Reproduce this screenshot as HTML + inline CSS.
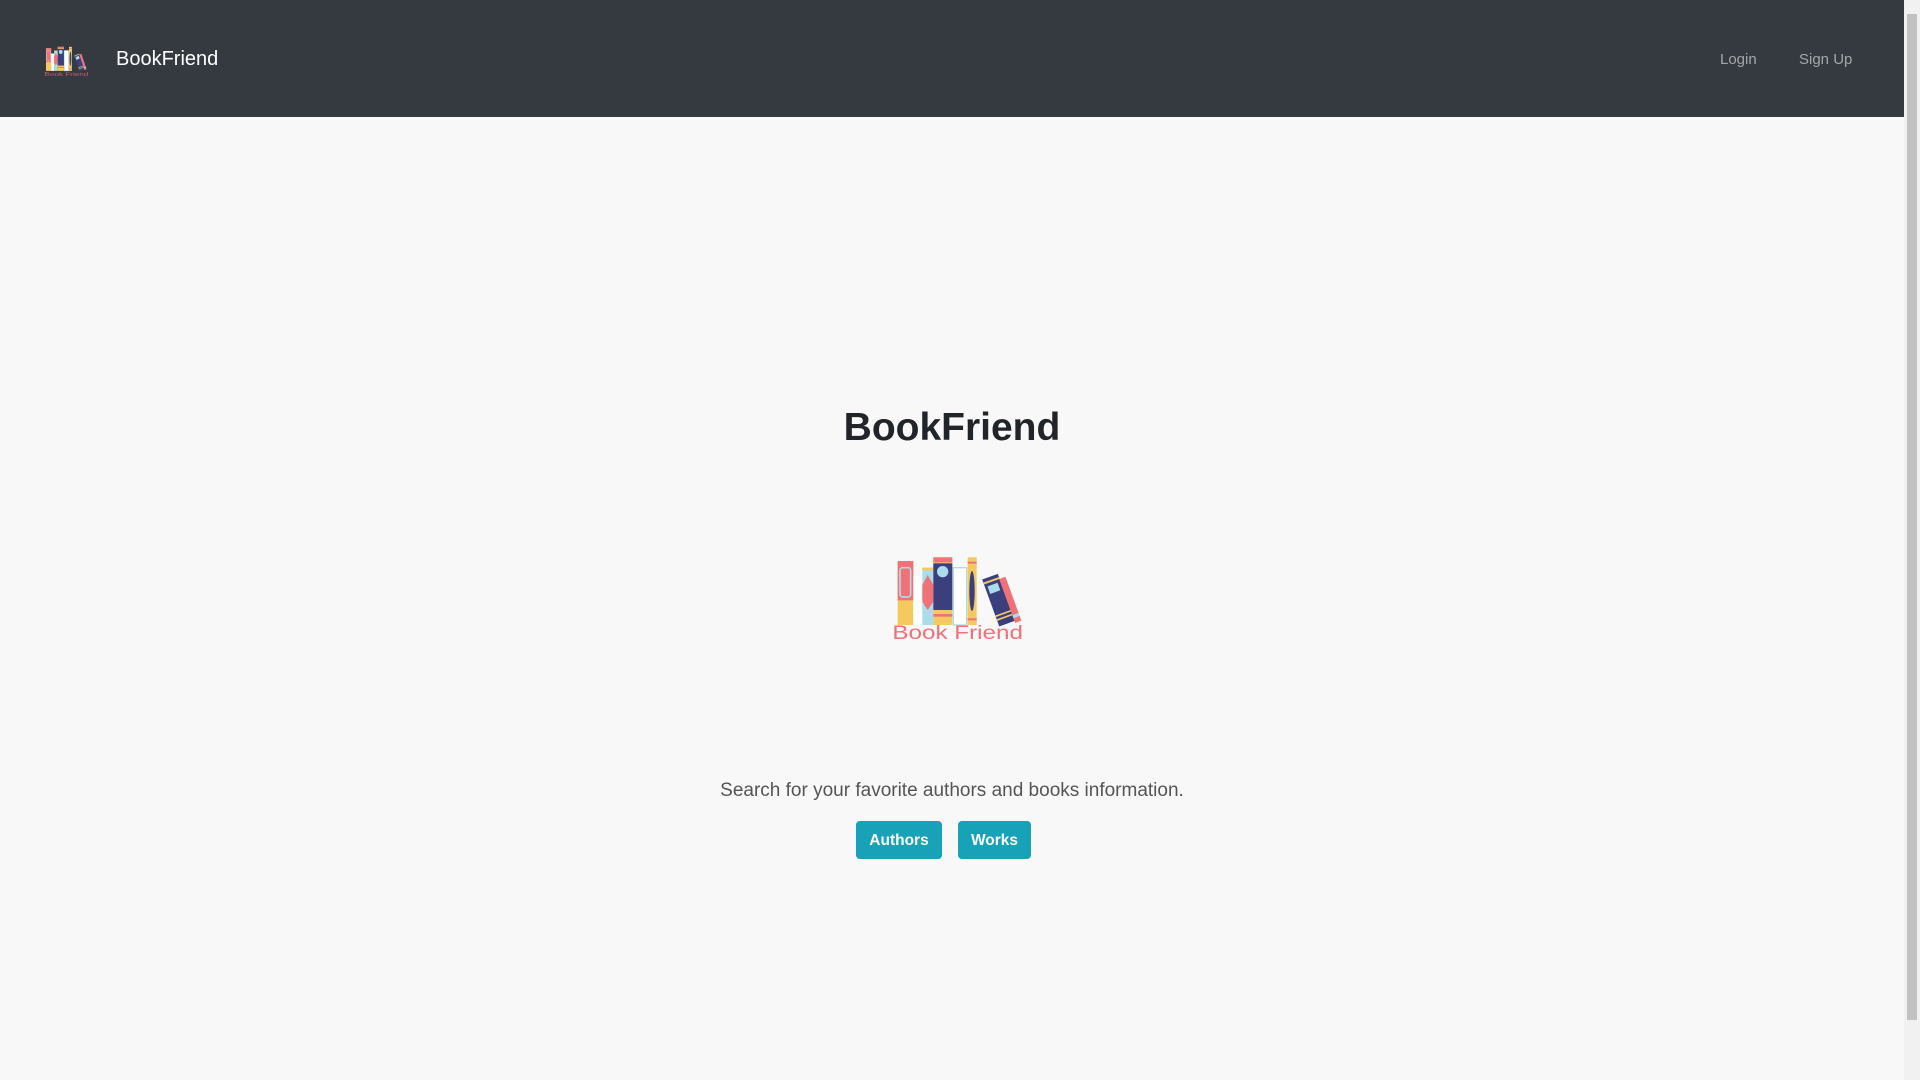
<!DOCTYPE html>
<html><head><meta charset="utf-8"><style>
*{margin:0;padding:0;box-sizing:border-box}
html,body{width:1920px;height:1080px;overflow:hidden;background:#f8f8f8;font-family:"Liberation Sans",sans-serif}
.nav{position:absolute;left:0;top:0;width:1904px;height:117px;background:#343a40}
.brand{position:absolute;left:116px;top:48px;font-size:20px;color:#fff}
.nl{position:absolute;top:51px;font-size:15px;color:rgba(255,255,255,.55)}
h1{position:absolute;left:0;width:1904px;top:406px;text-align:center;font-size:39px;font-weight:bold;color:#212529}
.lead{position:absolute;left:0;width:1904px;top:780px;text-align:center;font-size:19px;color:#555;font-weight:300}
.btn{position:absolute;top:821px;height:38px;background:#17a2b8;color:#fff;font-weight:bold;font-size:15.5px;border-radius:4px;text-align:center;line-height:40px}
.sb{position:absolute;right:0;top:0;width:16px;height:1080px;background:#f1f1f1}
.sb div{position:absolute;left:3px;top:14px;width:10px;height:1006px;background:#c1c1c1}
</style></head><body>
<div class="nav">
<svg style="position:absolute;left:44px;top:46px" width="46" height="32" viewBox="95 105 420 270" preserveAspectRatio="none">
<g id="bk">
<rect x="113" y="123" width="47" height="192" fill="#f4c95d"/><rect x="113" y="123" width="47" height="118" fill="#f07178"/><rect x="120" y="143" width="32" height="88" rx="8" fill="none" stroke="#a8dde9" stroke-width="5"/>
<rect x="160" y="168" width="27" height="147" fill="#fff"/>
<rect x="187" y="143" width="33" height="172" fill="#a8dde9"/><polygon points="187,195 203,165 220,195 220,245 203,270 187,245" fill="#f07178"/><rect x="187" y="143" width="33" height="8" fill="#f4c95d"/>
<rect x="220" y="112" width="57" height="203" fill="#f4c95d"/><rect x="220" y="130" width="57" height="140" fill="#3b3f7e"/><circle cx="248" cy="155" r="17" fill="#a8dde9"/><rect x="220" y="112" width="57" height="15" fill="#f07178"/><rect x="220" y="282" width="57" height="8" fill="#f07178"/>
<rect x="280" y="143" width="40" height="172" fill="#fff" stroke="#a8dde9" stroke-width="4"/>
<rect x="323" y="112" width="27" height="203" fill="#f4c95d"/><ellipse cx="336" cy="213" rx="8" ry="60" fill="#3b3f7e"/><rect x="323" y="125" width="27" height="6" fill="#f07178"/><rect x="323" y="295" width="27" height="6" fill="#f07178"/>
<g transform="rotate(-20 390 170)"><rect x="365" y="170" width="50" height="150" fill="#3b3f7e"/><rect x="373" y="195" width="32" height="24" fill="#a8dde9"/><rect x="365" y="180" width="50" height="6" fill="#f4c95d"/><rect x="365" y="285" width="50" height="5" fill="#f4c95d"/><rect x="365" y="297" width="50" height="5" fill="#f4c95d"/></g>
<g transform="rotate(-20 410 180)"><rect x="418" y="180" width="20" height="140" fill="#f07178"/><rect x="418" y="295" width="20" height="10" fill="#a8dde9"/></g>
</g>
<text x="100" y="360" textLength="400" lengthAdjust="spacingAndGlyphs" font-size="48" font-family="Liberation Sans" fill="#c9596a">Book Friend</text>
</svg>
<div class="brand">BookFriend</div>
<div class="nl" style="left:1720px">Login</div>
<div class="nl" style="left:1799px">Sign Up</div>
</div>
<h1>BookFriend</h1>
<svg style="position:absolute;left:860px;top:520px" width="200" height="140" viewBox="0 0 600 420"><use href="#bk"/><text x="97" y="357" textLength="392" lengthAdjust="spacingAndGlyphs" font-size="58" font-family="Liberation Sans" fill="#f07178">Book Friend</text></svg>
<div class="lead">Search for your favorite authors and books information.</div>
<div class="btn" style="left:856px;width:86px">Authors</div>
<div class="btn" style="left:958px;width:73px">Works</div>
<div class="sb"><div></div></div>
</body></html>
